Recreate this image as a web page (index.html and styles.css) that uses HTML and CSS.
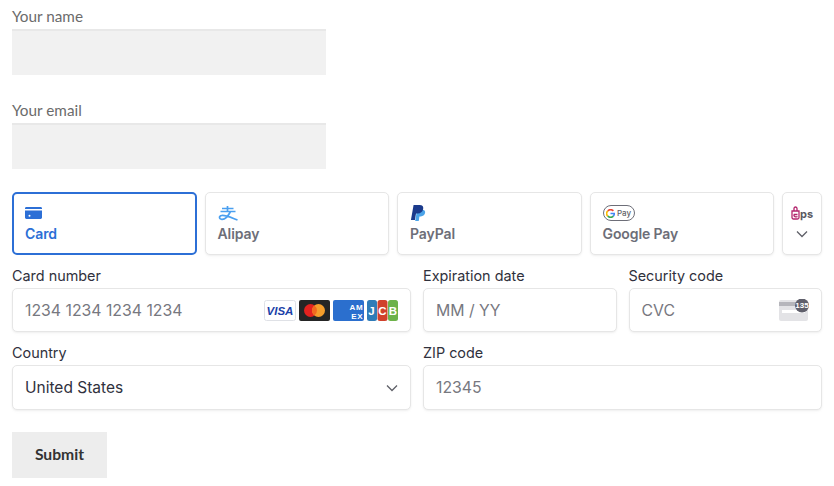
FILE: index.html
```html
<!DOCTYPE html>
<html lang="en">
<head>
<meta charset="utf-8">
<title>Checkout</title>
<link rel="stylesheet" href="styles.css">
</head>
<body>
<form class="page">
  <div class="contact">
    <label class="plain-label">Your name</label>
    <div class="plain-input"></div>
  </div>
  <div class="contact second">
    <label class="plain-label">Your email</label>
    <div class="plain-input"></div>
  </div>
  <div class="tabs">
    <div class="tab active">
      <svg class="tab-icon" width="17" height="16" viewBox="0 0 17 16"><path fill="#2c6fd6" d="M0 3.400C0 2.600.6 2 1.400 2h14.200c.8 0 1.400.6 1.400 1.400V4H0zM0 5.600h17v7c0 .8-.6 1.400-1.400 1.400H1.400C.6 14 0 13.400 0 12.600z"/><circle cx="4.500" cy="10.700" r="1" fill="#fff"/></svg>
      <span>Card</span>
    </div>
    <div class="tab">
      <svg class="tab-icon" width="20" height="16" viewBox="0 0 20 16"><path fill="none" stroke="#4a9ff0" stroke-width="1.700" d="M9.500 1v5M4 3.500h11.500M2.500 6.500h15M12.500 6.500C10 11.500 6.500 14.500 3.800 14.300 1 14.100.5 11 3.800 10.500c3.500-.5 9 2 15.700 4.500"/></svg>
      <span>Alipay</span>
    </div>
    <div class="tab">
      <svg class="tab-icon" width="16" height="17" viewBox="0 0 16 17"><path fill="#4ba3e8" d="M7 5h5.500c2.500 0 3.500 1.400 3 3.600-.6 2.600-2.300 3.500-4.500 3.500H9.500L8.800 17H5z"/><path fill="#1b3a8c" d="M3.300 0h6.400c3 0 4.300 1.700 3.800 4.200-.6 3-2.800 4.700-5.800 4.700H5.900L4.700 16H.5z"/></svg>
      <span>PayPal</span>
    </div>
    <div class="tab">
      <span class="gpay">
        <svg width="9" height="9" viewBox="0 0 10 10"><path fill="none" stroke="#ea4335" stroke-width="1.800" d="M8.200 2.100A4.200 4.200 0 0 0 2 2.100"/><path fill="none" stroke="#fbbc04" stroke-width="1.800" d="M2 2.100a4.200 4.200 0 0 0 0 5.800"/><path fill="none" stroke="#34a853" stroke-width="1.800" d="M2 7.900a4.200 4.200 0 0 0 6.200 0"/><path fill="none" stroke="#4285f4" stroke-width="1.800" d="M8.200 7.900A4.200 4.200 0 0 0 9.200 5H5"/></svg>
        <span>Pay</span>
      </span>
      <span>Google Pay</span>
    </div>
    <div class="tab more">
      <span class="eps">
        <svg width="9" height="14" viewBox="0 0 9 14"><path fill="none" stroke="#b3246d" stroke-width="1.300" d="M1 5h7v6.500a1.500 1.500 0 0 1-1.500 1.500h-4A1.500 1.500 0 0 1 1 11.500zM3 5V2.500a1.500 1.500 0 0 1 3 0V5M2.800 8.500h3.700M2.800 8.500c0 2.300 1.700 2.500 3.700 2.200"/></svg><span>ps</span>
      </span>
      <svg class="chev" width="12" height="8" viewBox="0 0 12 8"><path fill="none" stroke="#5f6068" stroke-width="1.300" d="M1 1.500l5 5 5-5"/></svg>
    </div>
  </div>
  <div class="fields">
    <div class="field">
      <label>Card number</label>
      <div class="box">
        <span class="ph">1234 1234 1234 1234</span>
        <span class="brands">
          <svg width="32" height="21" viewBox="0 0 32 21"><rect x=".5" y=".5" width="31" height="20" rx="2" fill="#fff" stroke="#dfe1e6"/><text x="16" y="15" text-anchor="middle" class="visa">VISA</text></svg>
          <svg width="31" height="21" viewBox="0 0 31 21"><rect width="31" height="21" rx="2" fill="#252525"/><circle cx="11.500" cy="10.500" r="6.500" fill="#e3221f"/><circle cx="19.500" cy="10.500" r="6.500" fill="#f59e2c"/><path d="M15.500 5.400a6.500 6.500 0 0 1 0 10.200 6.500 6.500 0 0 1 0-10.200z" fill="#f26a1f"/></svg>
          <svg width="31" height="21" viewBox="0 0 31 21"><rect width="31" height="21" rx="2" fill="#2b6fce"/><text x="30.500" y="9.500" text-anchor="end" class="amex">AM</text><text x="30.500" y="19" text-anchor="end" class="amex">EX</text></svg>
          <svg width="31" height="21" viewBox="0 0 31 21"><rect width="10" height="21" rx="2.500" fill="#2f7cb8"/><rect x="10.500" width="10" height="21" rx="2.500" fill="#d0412c"/><rect x="21" width="10" height="21" rx="2.500" fill="#6db24a"/><text x="4.500" y="15" text-anchor="middle" class="jcb">J</text><text x="15.500" y="15" text-anchor="middle" class="jcb">C</text><text x="26" y="15" text-anchor="middle" class="jcb">B</text></svg>
        </span>
      </div>
    </div>
    <div class="split">
      <div class="field">
        <label>Expiration date</label>
        <div class="box"><span class="ph">MM / YY</span></div>
      </div>
      <div class="field">
        <label>Security code</label>
        <div class="box">
          <span class="ph">CVC</span>
          <svg class="cvc" width="30" height="22" viewBox="0 0 30 22"><rect y="1" width="29" height="21" rx="2" fill="#e3e3e6"/><rect y="3" width="29" height="4" fill="#b5b5bb"/><rect x="3" y="11" width="23" height="3" fill="#fff"/><circle cx="23" cy="6.500" r="7" fill="#5f5f6b"/><text x="23" y="9.300" text-anchor="middle" class="cvc-num">135</text></svg>
        </div>
      </div>
    </div>
    <div class="field">
      <label>Country</label>
      <div class="box tall">
        <span class="value">United States</span>
        <svg width="12" height="8" viewBox="0 0 12 8"><path fill="none" stroke="#5f6068" stroke-width="1.300" d="M1 1.500l5 5 5-5"/></svg>
      </div>
    </div>
    <div class="field">
      <label>ZIP code</label>
      <div class="box tall"><span class="ph">12345</span></div>
    </div>
  </div>
  <button class="submit" type="button">Submit</button>
</form>
</body>
</html>
```
FILE: styles.css
```css
* { box-sizing: border-box; }
html, body { margin: 0; background: #fff; }
body { font-family: "Inter", "Liberation Sans", sans-serif; overflow: hidden; }
.page { width: 834px; height: 486px; padding: 7px 12px 0; }
.contact { width: 314px; }
.contact.second { margin-top: 26px; }
.plain-label { display: block; font: 15.300px/18px "Lato", sans-serif; color: #6b6b6b; height: 22px; }
.plain-input { height: 46px; background: #f1f1f1; border-top: 2px solid #e8e8e8; }
.tabs { display: flex; gap: 8px; margin-top: 23px; height: 63px; }
.tab { flex: 1 1 0; display: flex; flex-direction: column; justify-content: flex-start; padding: 12px 12px 0; background: #fff; border: 1px solid #e6e6e6; border-radius: 5px; box-shadow: 0 1px 2px rgba(0,0,0,.05), 0 2px 4px rgba(0,0,0,.02); color: #6d6e78; font-size: 14px; letter-spacing: -.1px; font-weight: 600; line-height: 18px; }
.tab-icon { height: 16px; margin-bottom: 4px; display: block; }
.tab.active { border: 2px solid #2c6fd6; color: #2c6fd6; padding: 11px 11px 0; box-shadow: none; }
.gpay { display: flex; align-items: center; justify-content: center; width: 32px; height: 16px; margin-bottom: 4px; border: 1px solid #6d6e78; border-radius: 8px; font-size: 8px; line-height: 1; letter-spacing: 0; font-weight: 500; color: #5f6368; gap: 2px; }
.gpay svg { display: block; }
.more { flex: 0 0 40px; padding: 11px 0 0; align-items: center; }
.eps { display: flex; align-items: flex-end; height: 16px; margin-bottom: 10px; font-size: 11px; font-weight: 700; line-height: 11px; color: #5a5a62; }
.chev { display: block; }
.fields { display: grid; grid-template-columns: 1fr 1fr; column-gap: 12px; row-gap: 11px; margin-top: 11px; }
.split { display: grid; grid-template-columns: 1fr 1fr; column-gap: 12px; }
.field label { display: block; height: 22px; font-size: 14.400px; line-height: 20px; color: #30313d; }
.box { display: flex; align-items: center; justify-content: space-between; height: 44px; padding: 0 12px; background: #fff; border: 1px solid #e6e6e6; border-radius: 5px; box-shadow: 0 1px 2px rgba(0,0,0,.05), 0 2px 4px rgba(0,0,0,.02); font-size: 15.800px; }
.tall { height: 45px; }
.ph { color: #77787f; }
.value { color: #30313d; font-size: 15.500px; }
.brands { display: flex; gap: 3px; }
.brands svg { display: block; }
.visa { font: italic 800 11.500px "Liberation Sans", sans-serif; fill: #1a3fa8; }
.amex { font: 800 8px "Liberation Sans", sans-serif; letter-spacing: .8px; fill: #fff; }
.jcb { font: 800 11.500px "Liberation Sans", sans-serif; fill: #fff; }
.cvc-num { font: 700 8px "Liberation Sans", sans-serif; fill: #fff; }
.submit { display: block; width: 95px; height: 46px; margin-top: 22px; padding: 0 0 2px; border: 0; background: #ededed; color: #333; font: 700 15.700px "Lato", sans-serif; }
```
